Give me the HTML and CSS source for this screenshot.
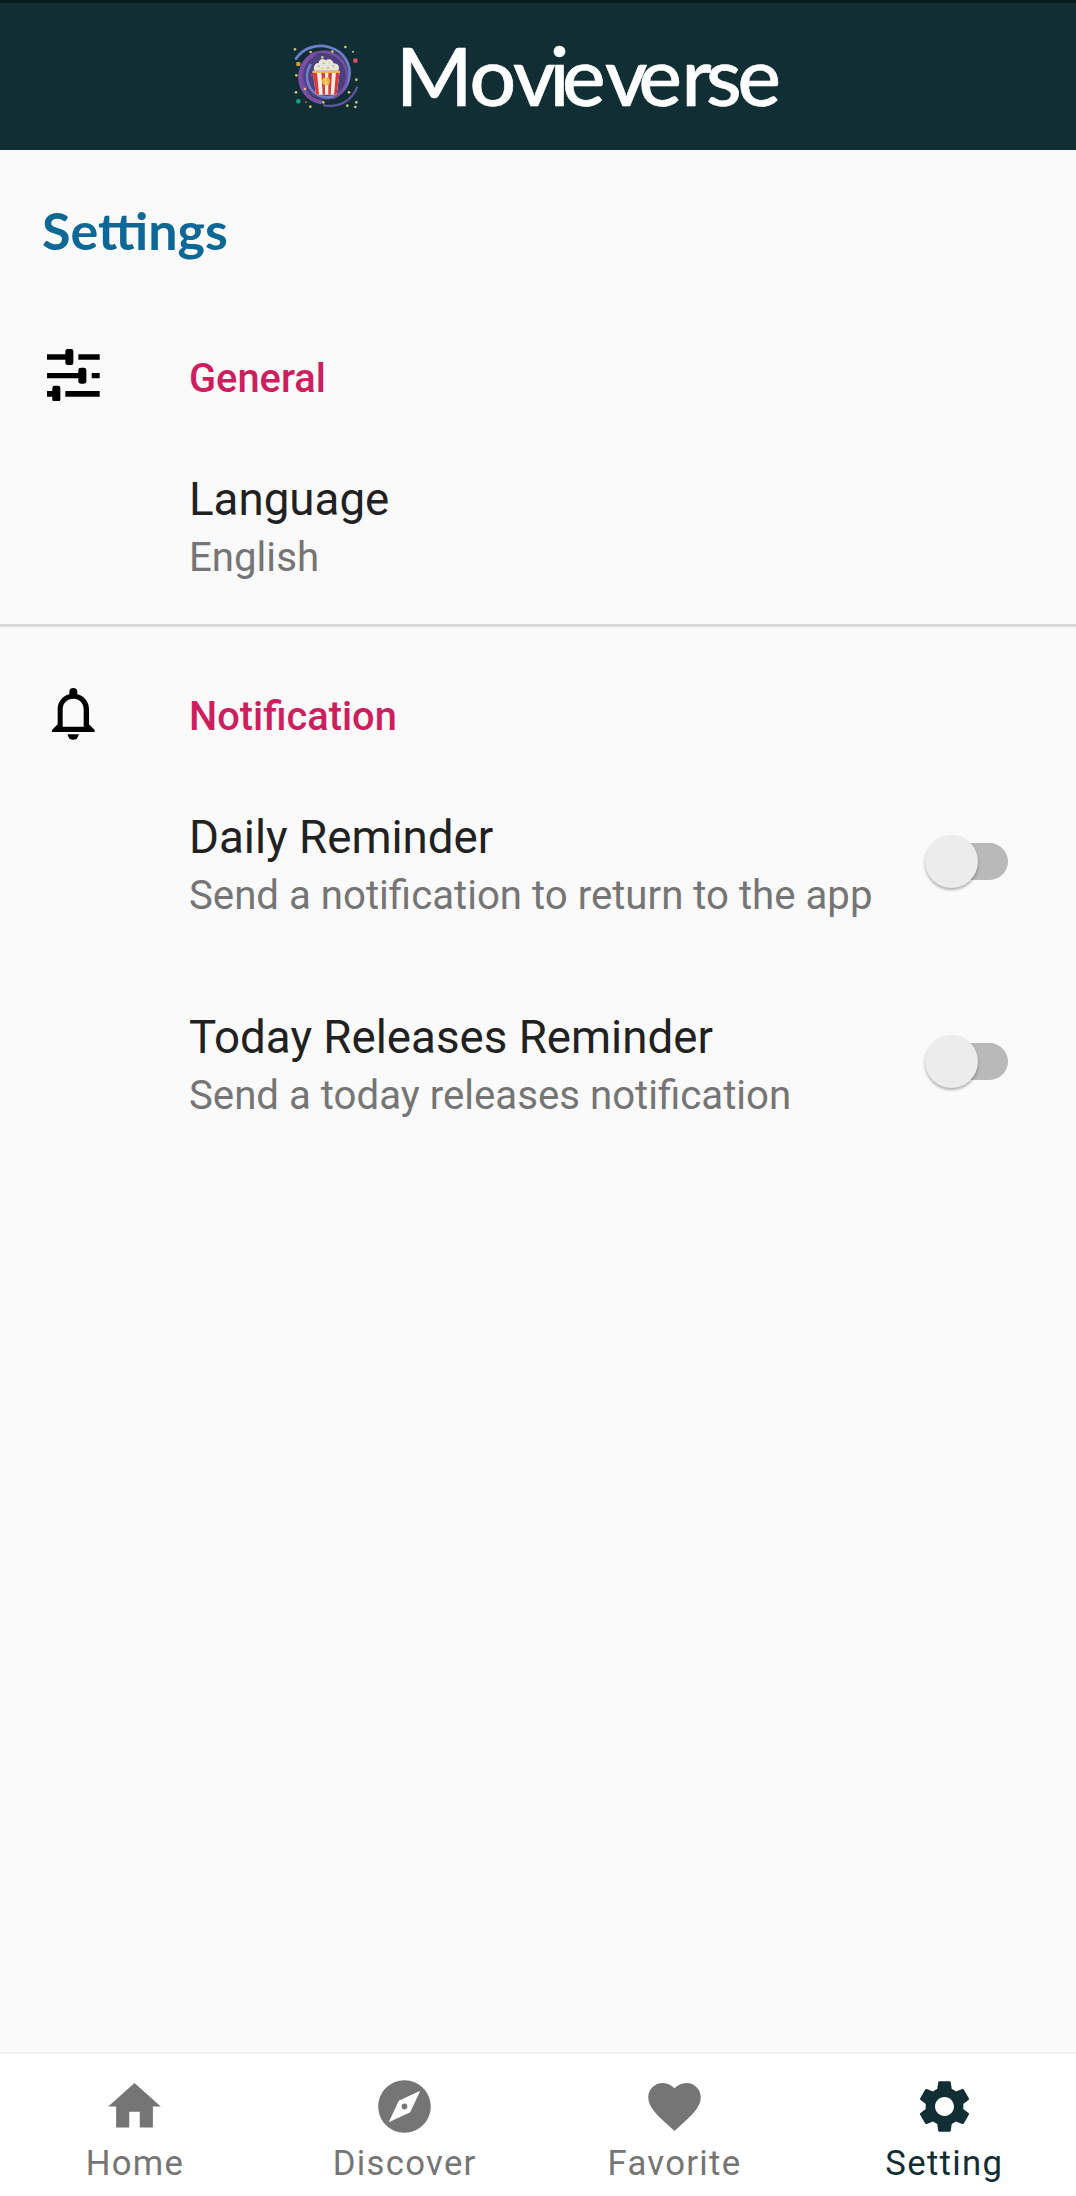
FILE: index.html
```html
<!DOCTYPE html>
<html lang="en">
<head>
<meta charset="utf-8">
<title>Movieverse</title>
<link rel="stylesheet" href="styles.css">
</head>
<body>
<header class="appbar">
  <svg class="logo" viewBox="0 0 270 270" aria-hidden="true">
    <circle cx="137" cy="135" r="75" fill="#4b3f80"/>
    <path d="M77 176A72 72 0 0 1 106 70" fill="none" stroke="#70459a" stroke-width="12"/>
    <path d="M98 76A76 76 0 0 0 126 217" fill="none" stroke="#7b50a4" stroke-width="12"/>
    <path d="M48 86C68 55 110 40 148 52C192 64 216 104 207 145C197 188 160 212 121 198C83 184 70 138 91 105" fill="none" stroke="#6d7fc8" stroke-width="8" stroke-linecap="round"/>
    <path d="M92 75C130 53 180 73 196 110C210 148 194 190 158 205" fill="none" stroke="#75509d" stroke-width="7"/>
    <path d="M231 173C216 211 178 234 132 226" fill="none" stroke="#65549f" stroke-width="7" stroke-linecap="round"/>
    <path d="M98 127h81l-9 67h-62z" fill="#f4eee3"/>
    <path d="M98 127h13l6 67h-9zM124 127h11v67h-7zM145 127h11l-4 67h-7zM168 127h11l-9 67h-8z" fill="#d93a3c"/>
    <path d="M97 122h83v7H97z" fill="#f2b64a"/>
    <path d="M103 122c-5-14 4-24 13-23 1-12 13-15 20-8 11-8 24 0 24 9 13-2 21 10 15 22z" fill="#e9e4d5"/>
    <g fill="#b9b3a2"><circle cx="117" cy="108" r="3"/><circle cx="131" cy="100" r="3"/><circle cx="144" cy="113" r="3"/><circle cx="160" cy="108" r="3"/><circle cx="127" cy="116" r="2"/><circle cx="147" cy="98" r="2"/></g>
    <circle cx="138" cy="154" r="12" fill="#f2b33e"/>
    <path d="M142 148c-8-3-10 4-4 6s4 9-4 6" fill="none" stroke="#fff0b0" stroke-width="3"/>
    <circle cx="55" cy="102" r="7" fill="#d89a3d"/>
    <circle cx="226" cy="92" r="7" fill="#d64b68"/>
    <circle cx="55" cy="214" r="7" fill="#159d7c"/>
    <g fill="#cfc47c"><circle cx="45" cy="58" r="4"/><circle cx="92" cy="66" r="4"/><circle cx="157" cy="65" r="4"/><circle cx="196" cy="51" r="4"/><circle cx="219" cy="65" r="3"/><circle cx="49" cy="136" r="4"/><circle cx="48" cy="187" r="4"/><circle cx="75" cy="177" r="4"/><circle cx="91" cy="230" r="4"/><circle cx="130" cy="217" r="4"/><circle cx="207" cy="187" r="4"/><circle cx="229" cy="149" r="4"/><circle cx="229" cy="217" r="4"/><circle cx="202" cy="227" r="4"/><circle cx="226" cy="231" r="4"/><circle cx="127" cy="82" r="4"/></g>
    <g fill="#b0683e"><circle cx="78" cy="217" r="3"/><circle cx="95" cy="135" r="3"/></g>
  </svg>
  <svg class="wordmark" viewBox="390 3 400 147" role="img" aria-label="Movieverse">
    <text class="wordmark-text" y="105.500" x="396 469.500 513 549.500 562 605 638.500 681.500 706 737.500">Movieverse</text>
  </svg>
</header>

<main class="content">
  <h1 class="title">Settings</h1>

  <section class="group">
    <div class="group-head">
      <div class="lead">
        <svg class="icon-tune" viewBox="142 507 158 158" aria-hidden="true">
          <path d="M142 523h60v16h-60zM236 523h64v16h-64zM142 579h98v16h-98zM276 579h24v16h-24zM142 633h20v17h-20zM197 633h103v17H197z"/>
          <rect x="197" y="507" width="24" height="48" rx="7"/>
          <rect x="236" y="563" width="24" height="48" rx="7"/>
          <rect x="158" y="617" width="24" height="48" rx="7"/>
        </svg>
      </div>
      <h2 class="group-title">General</h2>
    </div>
    <div class="item">
      <div class="item-text">
        <div class="item-title">Language</div>
        <div class="item-sub">English</div>
      </div>
    </div>
  </section>

  <section class="group group-divided">
    <div class="group-head">
      <div class="lead">
        <svg class="icon-bell" viewBox="157 744 128 156" aria-hidden="true">
          <path fill-rule="evenodd" d="M209 763V756a12 12 0 0 1 24 0V763C254 768 268 786 268 808V853L285 870V876H157V870L174 853V808C174 786 188 768 209 763zM189 860H252V808C252 789 239 776 221 776S189 789 189 808z"/>
          <path d="M204 883H237a16.500 16.500 0 0 1-33 0z"/>
        </svg>
      </div>
      <h2 class="group-title">Notification</h2>
    </div>
    <div class="item">
      <div class="item-text">
        <div class="item-title">Daily Reminder</div>
        <div class="item-sub">Send a notification to return to the app</div>
      </div>
      <div class="switch"><div class="thumb"></div></div>
    </div>
    <div class="item item-next">
      <div class="item-text">
        <div class="item-title">Today Releases Reminder</div>
        <div class="item-sub">Send a today releases notification</div>
      </div>
      <div class="switch"><div class="thumb"></div></div>
    </div>
  </section>
</main>

<nav class="tabs">
  <div class="tab">
    <svg class="tab-icon" viewBox="0 0 24 24"><path d="M10 20v-6h4v6h5v-8h3L12 3 2 12h3v8z"/></svg>
    <span>Home</span>
  </div>
  <div class="tab">
    <svg class="tab-icon" viewBox="0 0 24 24"><path d="M12 10.900c-.61 0-1.100.49-1.100 1.100s.49 1.100 1.100 1.100c.61 0 1.100-.49 1.100-1.100s-.49-1.100-1.100-1.100zM12 2C6.480 2 2 6.480 2 12s4.480 10 10 10 10-4.480 10-10S17.520 2 12 2zm2.190 12.190L6 18l3.810-8.190L18 6l-3.810 8.190z"/></svg>
    <span>Discover</span>
  </div>
  <div class="tab">
    <svg class="tab-icon" viewBox="0 0 24 24"><path d="M12 21.350l-1.450-1.320C5.400 15.360 2 12.280 2 8.500 2 5.420 4.420 3 7.500 3c1.740 0 3.410.81 4.500 2.090C13.090 3.810 14.760 3 16.500 3 19.580 3 22 5.420 22 8.500c0 3.780-3.400 6.860-8.550 11.540L12 21.350z"/></svg>
    <span>Favorite</span>
  </div>
  <div class="tab tab-active">
    <svg class="tab-icon" viewBox="0 0 24 24"><path d="M19.140 12.940c.04-.3.060-.61.060-.94 0-.32-.02-.64-.07-.94l2.030-1.580c.18-.14.23-.41.12-.61l-1.920-3.320c-.12-.22-.37-.29-.59-.22l-2.390.96c-.5-.38-1.030-.7-1.620-.94l-.36-2.540c-.04-.24-.24-.41-.48-.41h-3.840c-.24 0-.43.17-.47.41l-.36 2.540c-.59.24-1.130.57-1.620.94l-2.390-.96c-.22-.08-.47 0-.59.22L2.740 8.870c-.12.21-.08.47.12.61l2.030 1.580c-.05.3-.09.63-.09.94s.02.64.07.94l-2.030 1.580c-.18.14-.23.41-.12.61l1.920 3.320c.12.22.37.29.59.22l2.390-.96c.5.38 1.030.7 1.620.94l.36 2.540c.05.24.24.41.48.41h3.840c.24 0 .44-.17.47-.41l.36-2.540c.59-.24 1.130-.56 1.620-.94l2.390.96c.22.08.47 0 .59-.22l1.920-3.320c.12-.22.07-.47-.12-.61l-2.010-1.580zM12 15.600c-1.980 0-3.600-1.620-3.600-3.600s1.620-3.600 3.600-3.600 3.600 1.620 3.600 3.600-1.620 3.600-3.600 3.600z"/></svg>
    <span>Setting</span>
  </div>
</nav>
</body>
</html>
```

FILE: styles.css
```css
* { box-sizing: border-box; }

body {
  margin: 0;
  height: 2196px;
  display: flex;
  flex-direction: column;
  overflow: hidden;
  background: #fafafa;
  color: #212121;
  font-family: Roboto, sans-serif;
}

.appbar {
  height: 150px;
  flex: none;
  display: flex;
  padding-left: 280px;
  background: #102e33;
  border-top: 3px solid #081a1c;
}

.logo {
  width: 90px;
  height: 90px;
  margin-top: 27px;
}

.wordmark {
  width: 400px;
  height: 147px;
  margin-left: 20px;
}

.wordmark-text {
  font-family: Lato, sans-serif;
  font-size: 82px;
  font-weight: 500;
  fill: #fff;
  stroke: #fff;
  stroke-width: .6px;
  stroke-linejoin: round;
}

.content { flex: 1; }

.title {
  margin: 50px 0 79px 42px;
  font: 700 52px/60px Lato, sans-serif;
  color: #0d6896;
}

.group-divided {
  margin-top: 42px;
  padding-top: 50px;
  border-top: 3px solid #dadada;
}

.group-head {
  display: flex;
  height: 72px;
  align-items: center;
}

.lead {
  width: 147px;
  margin-right: 42px;
  display: flex;
  justify-content: center;
}

.icon-tune { width: 52.700px; height: 52.700px; }
.icon-bell { width: 42.700px; height: 52px; margin-top: 2px; }

.group-title {
  margin: 8px 0 0;
  font-size: 39.800px;
  line-height: 48px;
  font-weight: 500;
  color: #cd1f5f;
}

.item {
  display: flex;
  justify-content: space-between;
  margin-top: 62px;
  padding: 0 68px 0 189px;
}

.item-next { margin-top: 91px; }

.item-title {
  font-size: 45.700px;
  line-height: 54px;
}

.item-sub {
  margin-top: 7px;
  font-size: 40.200px;
  line-height: 48px;
  color: #757575;
}

.switch {
  width: 76px;
  height: 37px;
  margin-top: 32px;
  border-radius: 19px;
  background: #b9b9b9;
  display: flex;
  align-items: center;
}

.thumb {
  width: 53px;
  height: 53px;
  flex: none;
  margin-left: -7px;
  border-radius: 50%;
  background: #ececec;
  box-shadow: 0 2px 3px rgba(0, 0, 0, .3);
}

.tabs {
  height: 144px;
  flex: none;
  display: flex;
  background: #fff;
  border-top: 2px solid #f2f2f2;
}

.tab {
  flex: none;
  width: 269.800px;
  display: flex;
  flex-direction: column;
  align-items: center;
  padding-top: 21px;
  font-size: 34.700px;
  line-height: 42px;
  letter-spacing: 1.300px;
  color: #757575;
}

.tab-icon {
  width: 63px;
  height: 63px;
  margin-bottom: 4px;
  fill: currentColor;
}

.tab-active { color: #102e33; }
```
